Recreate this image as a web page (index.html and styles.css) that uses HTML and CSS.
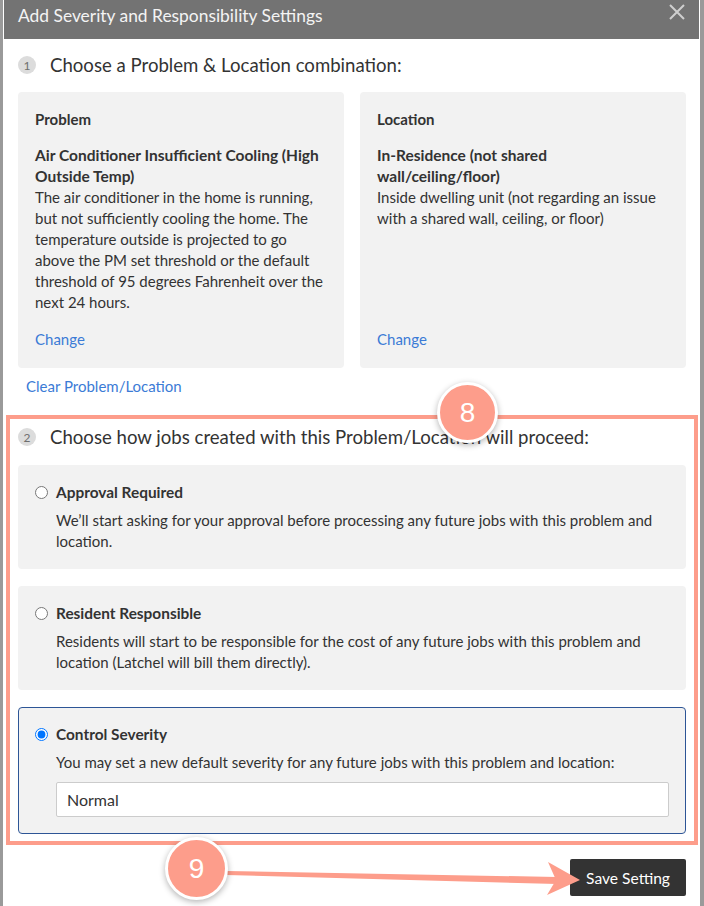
FILE: index.html
```html
<!DOCTYPE html>
<html>
<head>
<meta charset="utf-8">
<link rel="stylesheet" href="styles.css">
</head>
<body>
<div class="modal">
  <div class="modal-header">
    <span class="modal-title">Add Severity and Responsibility Settings</span>
    <svg class="close" width="16" height="16" viewBox="0 0 16 16"><path d="M1 1L15 15M15 1L1 15" stroke="#cfcfcf" stroke-width="2" fill="none"/></svg>
  </div>
  <div class="modal-body">
    <div class="step">
      <span class="step-num">1</span>
      <span class="step-title">Choose a Problem &amp; Location combination:</span>
    </div>
    <div class="cards">
      <div class="card">
        <div class="card-label">Problem</div>
        <div class="card-name">Air Conditioner Insufficient Cooling (High Outside Temp)</div>
        <div class="card-desc">The air conditioner in the home is running, but not sufficiently cooling the home. The temperature outside is projected to go above the PM set threshold or the default threshold of 95 degrees Fahrenheit over the next 24 hours.</div>
        <div class="card-foot"><a class="link">Change</a></div>
      </div>
      <div class="card">
        <div class="card-label">Location</div>
        <div class="card-name">In-Residence (not shared wall/ceiling/floor)</div>
        <div class="card-desc">Inside dwelling unit (not regarding an issue with a shared wall, ceiling, or floor)</div>
        <div class="card-foot"><a class="link">Change</a></div>
      </div>
    </div>
    <div class="clear"><a class="link">Clear Problem/Location</a></div>

    <div class="section2">
      <div class="badge badge-8">8</div>
      <div class="step">
        <span class="step-num">2</span>
        <span class="step-title">Choose how jobs created with this Problem/Location will proceed:</span>
      </div>
      <div class="options">
        <div class="option">
          <label class="option-head"><input type="radio" name="opt"><span class="option-label">Approval Required</span></label>
          <div class="option-desc">We’ll start asking for your approval before processing any future jobs with this problem and location.</div>
        </div>
        <div class="option">
          <label class="option-head"><input type="radio" name="opt"><span class="option-label">Resident Responsible</span></label>
          <div class="option-desc">Residents will start to be responsible for the cost of any future jobs with this problem and location (Latchel will bill them directly).</div>
        </div>
        <div class="option selected">
          <label class="option-head"><input type="radio" name="opt" checked><span class="option-label">Control Severity</span></label>
          <div class="option-desc">You may set a new default severity for any future jobs with this problem and location:</div>
          <div class="select">Normal</div>
        </div>
      </div>
    </div>

    <div class="footer">
      <div class="badge badge-9">9</div>
      <button class="save">Save Setting</button>
    </div>
  </div>
</div>
<svg class="arrow" width="704" height="906" viewBox="0 0 704 906">
  <polygon points="226,871 557,877 557,884 226,875" fill="#fd9d8b"/>
  <polygon points="548,862 580,880 547,895 556,880" fill="#fd9d8b"/>
</svg>
</body>
</html>
```

FILE: styles.css
```css
html, body {
  margin: 0;
  padding: 0;
}
body {
  background: #9a9a9a;
  width: 704px;
  height: 906px;
  overflow: hidden;
  position: relative;
  font-family: "Lato", "Open Sans", sans-serif;
  color: #333;
}
.modal {
  margin-left: 3px;
  width: 697px;
  min-height: 906px;
  background: #fff;
}
.modal-header {
  height: 39px;
  margin: 0 1px;
  background: #737373;
  display: flex;
  align-items: flex-start;
  justify-content: space-between;
  padding: 0 14px 0 14px;
}
.modal-title {
  color: #f4f4f4;
  font-size: 17.4px;
  line-height: 32px;
}
.close {
  margin-top: 4px;
  margin-right: 0;
}
.modal-body {
  padding: 0 14px 0 15px;
}
.step {
  display: flex;
  align-items: center;
  gap: 14px;
  height: 24px;
  margin-top: 14px;
}
.step-num {
  width: 18px;
  height: 18px;
  border-radius: 50%;
  background: #dcdcdc;
  color: #6f6f6f;
  font-size: 12px;
  display: flex;
  align-items: center;
  justify-content: center;
  flex: none;
}
.step-title {
  font-size: 18.6px;
  line-height: 24px;
  color: #333;
}
.cards {
  display: flex;
  gap: 16px;
  margin-top: 15px;
}
.card {
  flex: 1;
  background: #f2f2f2;
  border-radius: 4px;
  padding: 17px 17px 18px;
  display: flex;
  flex-direction: column;
  font-size: 15px;
  line-height: 21px;
}
.card-label {
  font-weight: 700;
  line-height: 20px;
}
.card-name {
  font-weight: 700;
  font-size: 15.5px;
  margin-top: 16px;
}
.card-foot {
  margin-top: auto;
  padding-top: 16px;
}
.link {
  color: #3b7bd6;
  cursor: pointer;
  font-size: 15px;
  line-height: 21px;
}
.clear {
  margin-top: 7px;
  padding-left: 8px;
  line-height: 21px;
}
.section2 {
  position: relative;
  margin: 18px -12px 0;
  border: 4px solid #fd9d8b;
  padding: 6px 8px 7px;
}
.section2 .step {
  margin-top: 0;
}
.options {
  display: flex;
  flex-direction: column;
  gap: 17px;
  margin-top: 16px;
}
.option {
  background: #f2f2f2;
  border-radius: 4px;
  padding: 17px;
  font-size: 15px;
  line-height: 21px;
}
.option.selected {
  border: 1px solid #2d5596;
  padding: 16px;
}
.option-head {
  display: flex;
  align-items: center;
  height: 20px;
}
.option-head input {
  margin: 0 8px 0 0;
  width: 13px;
  height: 13px;
}
.option-label {
  font-size: 15.4px;
  font-weight: 700;
  line-height: 20px;
}
.option-desc {
  margin-top: 8px;
  padding-left: 21px;
}
.select {
  margin: 9px 0 0 21px;
  height: 35px;
  box-sizing: border-box;
  background: #fff;
  border: 1px solid #cccccc;
  border-radius: 2px;
  padding-left: 10px;
  font-size: 16px;
  line-height: 33px;
  color: #333;
}
.footer {
  position: relative;
  display: flex;
  justify-content: flex-end;
  margin-top: 14px;
}
.save {
  width: 116px;
  height: 37px;
  background: #333;
  color: #fff;
  border: none;
  border-radius: 2px;
  font-family: "Lato", "Open Sans", sans-serif;
  font-size: 15.6px;
  padding: 0;
}
.badge {
  position: absolute;
  box-sizing: border-box;
  border-radius: 50%;
  border: 3px solid #fff;
  background: #fd9d8b;
  color: #fff;
  display: flex;
  align-items: center;
  justify-content: center;
  font-family: "Liberation Sans", Arial, sans-serif;
  font-size: 28px;
  box-shadow: 0 2px 6px rgba(0, 0, 0, 0.3);
  z-index: 2;
}
.badge-8 {
  width: 61px;
  height: 61px;
  left: 427px;
  top: -37px;
}
.badge-9 {
  width: 63px;
  height: 63px;
  left: 147px;
  top: -22px;
}
.arrow {
  position: absolute;
  left: 0;
  top: 0;
  pointer-events: none;
  z-index: 1;
}
```
